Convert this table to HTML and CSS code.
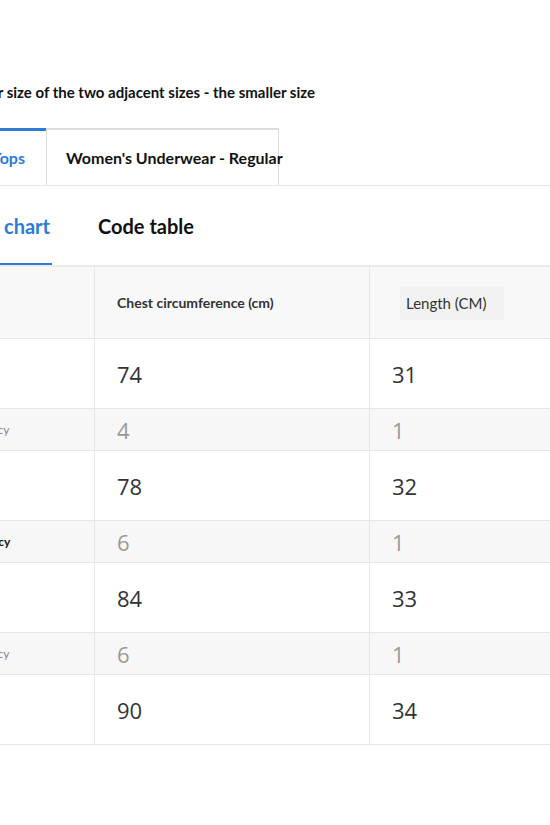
FILE: index.html
```html
<!DOCTYPE html>
<html lang="en">
  <head>
    <meta charset="UTF-8" />
    <meta name="viewport" content="width=device-width, initial-scale=1.0" />
    <title>Size guide</title>
    <link rel="stylesheet" href="styles.css">
  </head>
  <body>
    <div class="page">
      <p class="tip"><span>If you are between sizes, please choose the larger size of the two adjacent sizes - the smaller size</span></p>

      <div class="tab-bar">
        <div class="tabs">
          <a class="tab active" href="#">Women's Tops</a>
          <a class="tab" href="#">Women's Underwear - Regular</a>
        </div>
      </div>

      <div class="subtabs">
        <a class="subtab active" href="#">Size chart</a>
        <a class="subtab" href="#">Code table</a>
      </div>

      <table class="chart">
        <colgroup>
          <col class="col-size">
          <col class="col-chest">
          <col>
        </colgroup>
        <thead>
          <tr>
            <th>Size</th>
            <th class="head-chest">Chest circumference (cm)</th>
            <th><span class="head-length">Length (CM)</span></th>
          </tr>
        </thead>
        <tbody>
          <tr class="val"><td>S</td><td>74</td><td>31</td></tr>
          <tr class="diff"><td>Tolerancy</td><td>4</td><td>1</td></tr>
          <tr class="val"><td>M</td><td>78</td><td>32</td></tr>
          <tr class="diff strong"><td>Tolerancy</td><td>6</td><td>1</td></tr>
          <tr class="val"><td>L</td><td>84</td><td>33</td></tr>
          <tr class="diff"><td>Tolerancy</td><td>6</td><td>1</td></tr>
          <tr class="val"><td>XL</td><td>90</td><td>34</td></tr>
        </tbody>
      </table>
    </div>
  </body>
</html>
```

FILE: styles.css
```css
html,
body {
  overflow: hidden;
}
body {
  margin: 0;
  background: #fff;
  font-family: Lato, "Open Sans", sans-serif;
  color: #222;
}
a {
  text-decoration: none;
}
.page {
  width: 550px;
  padding-top: 82px;
}

/* tip line, cut off on the left */
.tip {
  display: flex;
  justify-content: flex-end;
  width: 315px;
  margin: 0 0 26px;
  font-size: 15px;
  font-weight: 700;
  line-height: 20px;
  white-space: nowrap;
  color: #111;
}

/* category tabs */
.tab-bar {
  border-bottom: 1px solid #e4e4e4;
}
.tabs {
  display: flex;
  justify-content: flex-end;
  width: 279px;
}
.tab {
  flex: none;
  box-sizing: border-box;
  width: 233px;
  height: 57px;
  line-height: 55px;
  padding: 0 0 0 19px;
  font-size: 16px;
  font-weight: 700;
  color: #111;
  white-space: nowrap;
  border: 1px solid #dcdcdc;
  border-bottom: 0;
  border-top-width: 2px;
}
.tab.active {
  width: auto;
  padding: 0 21px 0 20px;
  color: #2b7bd8;
  border: 0;
  border-top: 3px solid #2b7bd8;
  line-height: 54px;
}

/* chart / code tabs */
.subtabs {
  display: flex;
  justify-content: flex-end;
  gap: 44px;
  width: 196px;
}
.subtab {
  flex: none;
  height: 77px;
  line-height: 80px;
  padding: 0 2px;
  font-size: 20px;
  font-weight: 700;
  color: #111;
  white-space: nowrap;
  border-bottom: 2px solid transparent;
}
.subtab.active {
  color: #2b7bd8;
  border-bottom-color: #2b7bd8;
}

/* size table */
.chart {
  border-collapse: collapse;
  table-layout: fixed;
  width: 720px;
  margin-left: -66px;
  font-family: "Open Sans", "Noto Sans", sans-serif;
}
.col-size {
  width: 160px;
}
.col-chest {
  width: 275px;
}
.chart th,
.chart td {
  border: 1px solid #e6e6e6;
  padding: 0 0 0 22px;
  text-align: left;
}
.chart th {
  height: 71px;
  background: #f8f8f8;
  font-family: Lato, sans-serif;
  color: #333;
}
.chart thead th {
  border-top: 2px solid #ececec;
}
.head-chest {
  font-size: 14px;
  font-weight: 700;
}
.head-length {
  display: inline-block;
  margin-left: 8px;
  padding: 8px 18px 8px 6px;
  background: #f2f2f2;
  font-size: 15px;
  font-weight: 400;
}
.chart tr.val td {
  height: 69px;
  font-size: 22px;
  color: #333;
  background: #fff;
}
.chart tr.diff td {
  height: 41px;
  font-size: 22px;
  color: #9a9a9a;
  background: #f7f7f7;
}
.chart tr td:first-child {
  padding-left: 24px;
  font-family: Lato, sans-serif;
  font-size: 12px;
}
.chart tr.diff td:first-child {
  color: #888;
}
.chart tr.diff.strong td:first-child {
  color: #111;
  font-weight: 700;
}
```
